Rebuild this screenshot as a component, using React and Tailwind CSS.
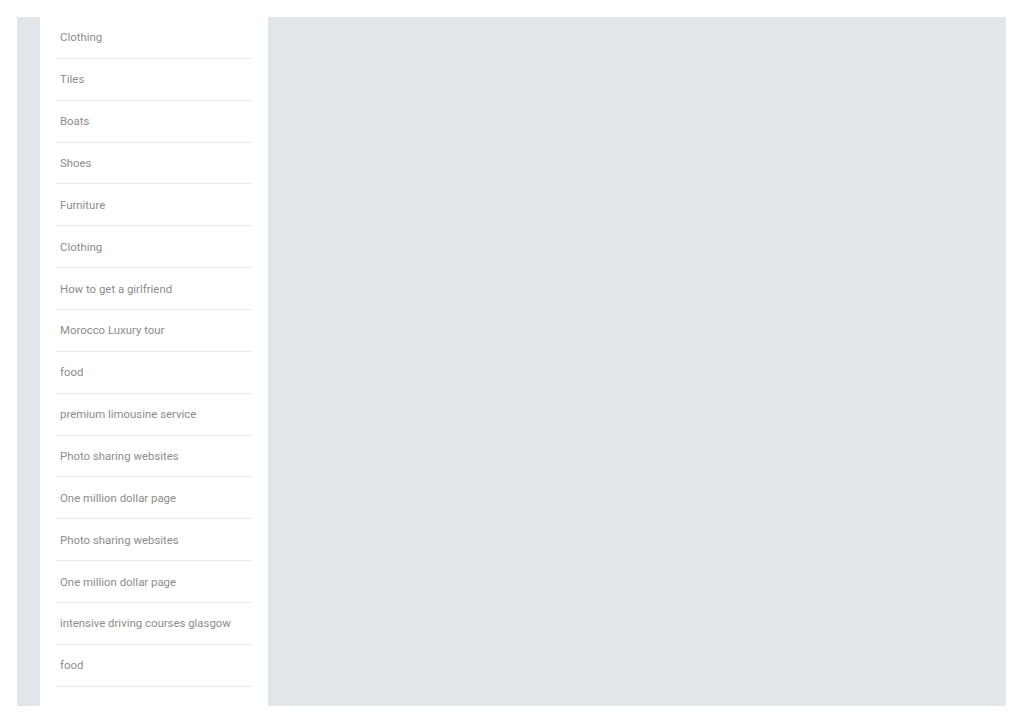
import React from 'react';

const items = [
  'Clothing',
  'Tiles',
  'Boats',
  'Shoes',
  'Furniture',
  'Clothing',
  'How to get a girlfriend',
  'Morocco Luxury tour',
  'food',
  'premium limousine service',
  'Photo sharing websites',
  'One million dollar page',
  'Photo sharing websites',
  'One million dollar page',
  'intensive driving courses glasgow',
  'food',
];

const App = () => {
  return (
    <div className="min-h-screen bg-white p-[17px] pr-[18px]" style={{ fontFamily: 'Roboto, "Liberation Sans", sans-serif' }}>
      <div className="flex h-[689px] bg-[#e2e5e9] pl-[23px]">
        {/* Sidebar list */}
        <div className="w-[228px] bg-white px-4">
          <ul>
            {items.map((item, i) => (
              <li
                key={i}
                className="flex h-[41.87px] items-center border-b border-[#e9e9e9] px-1 pt-px text-[11.4px] text-[#8c8c8c]"
              >
                {item}
              </li>
            ))}
          </ul>
        </div>

        {/* Main area */}
        <div className="flex-1" />
      </div>
    </div>
  );
};

export default App;
